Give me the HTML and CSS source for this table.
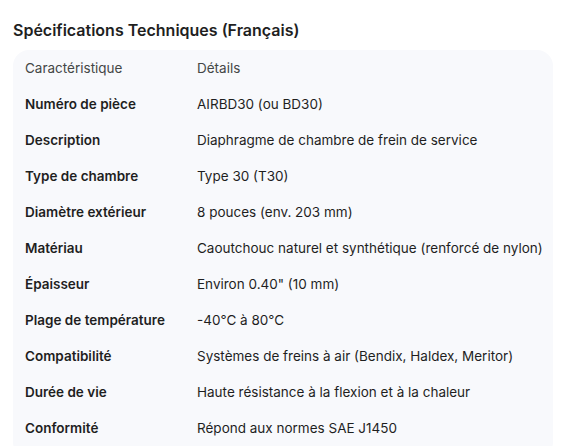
FILE: index.html
```html
<!DOCTYPE html>
<html lang="fr">
<head>
<meta charset="utf-8">
<link rel="stylesheet" href="styles.css">
</head>
<body>
<h2 class="title">Spécifications Techniques (Français)</h2>
<div class="card">
  <table class="specs">
    <thead>
      <tr><th>Caractéristique</th><th>Détails</th></tr>
    </thead>
    <tbody>
      <tr><td class="key">Numéro de pièce</td><td>AIRBD30 (ou BD30)</td></tr>
      <tr><td class="key">Description</td><td>Diaphragme de chambre de frein de service</td></tr>
      <tr><td class="key">Type de chambre</td><td>Type 30 (T30)</td></tr>
      <tr><td class="key">Diamètre extérieur</td><td>8 pouces (env. 203 mm)</td></tr>
      <tr><td class="key">Matériau</td><td>Caoutchouc naturel et synthétique (renforcé de nylon)</td></tr>
      <tr><td class="key">Épaisseur</td><td>Environ 0.40" (10 mm)</td></tr>
      <tr><td class="key">Plage de température</td><td>-40°C à 80°C</td></tr>
      <tr><td class="key">Compatibilité</td><td>Systèmes de freins à air (Bendix, Haldex, Meritor)</td></tr>
      <tr><td class="key">Durée de vie</td><td>Haute résistance à la flexion et à la chaleur</td></tr>
      <tr><td class="key">Conformité</td><td>Répond aux normes SAE J1450</td></tr>
    </tbody>
  </table>
</div>
</body>
</html>
```
FILE: styles.css
```css
html, body {
  margin: 0;
  padding: 0;
  background: #ffffff;
}
body {
  font-family: "Inter", "Roboto", sans-serif;
  color: #1f1f1f;
  padding: 20px 13px 0 13px;
}
.title {
  margin: 0 0 10px 0;
  font-size: 16px;
  font-weight: 600;
  line-height: 20px;
  color: #1f1f1f;
}
.card {
  background: #f8f9fc;
  border-radius: 16px;
  width: 540px;
  padding: 0 0 12px 0;
  overflow: hidden;
}
.specs {
  border-collapse: collapse;
  table-layout: fixed;
  width: 100%;
  font-size: 13.5px;
}
.specs th, .specs td {
  text-align: left;
  padding: 0 12px;
  height: 36px;
  vertical-align: middle;
  white-space: nowrap;
}
.specs th {
  font-weight: 400;
  color: #444746;
}
.specs th:first-child {
  width: 148px;
}
.specs td {
  color: #1f1f1f;
}
.specs td.key {
  font-weight: 600;
}
```
